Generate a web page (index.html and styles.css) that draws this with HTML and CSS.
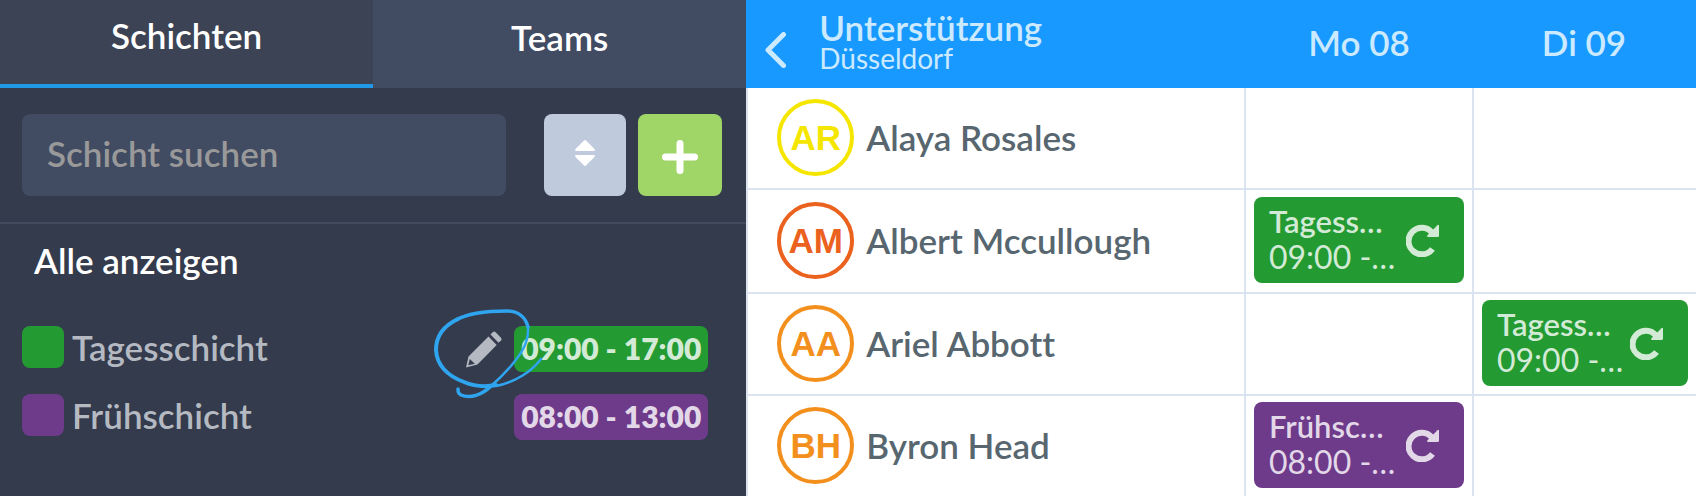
FILE: index.html
```html
<!DOCTYPE html>
<html lang="de">
<head>
    <meta charset="UTF-8">
    <meta name="viewport" content="width=device-width, initial-scale=1.0">
    <title>Schichtplan</title>
    <link rel="stylesheet" href="styles.css">
</head>
<body>
    <svg class="sprite" aria-hidden="true">
        <symbol id="icon-repeat" viewBox="0 0 34 34">
            <path d="M26 9.500A13.300 13.300 0 1 0 26.500 26" fill="none" stroke="currentColor" stroke-width="6"/>
            <path d="M31.500 2.200Q33 1 33 3V12.500Q33 14 31.500 14H22.500Q20 14 21.500 12.300Z" fill="currentColor"/>
        </symbol>
    </svg>

    <div class="app">

        <!-- Sidebar -->
        <aside class="sidebar">
            <nav class="tabs">
                <button type="button" class="tab active">Schichten</button>
                <button type="button" class="tab">Teams</button>
            </nav>

            <form class="search-bar">
                <input type="text" class="search-input" placeholder="Schicht suchen" aria-label="Schicht suchen">
                <button type="button" class="icon-button sort" aria-label="Sortieren">
                    <svg width="20" height="26" viewBox="0 0 20 26" fill="#fff">
                        <path d="M9 .5Q10-.5 11 .5L19.500 9Q20.500 11 19 11H1Q-.5 11 .5 9Z"/>
                        <path d="M9 25.500Q10 26.500 11 25.500L19.500 17Q20.500 15 19 15H1Q-.5 15 .5 17Z"/>
                    </svg>
                </button>
                <button type="button" class="icon-button add" aria-label="Schicht hinzufügen">
                    <svg width="36" height="34" viewBox="0 0 36 34" fill="none" stroke="#fff" stroke-width="7" stroke-linecap="round">
                        <path d="M18 3.500V30.500M3.500 17H32.500"/>
                    </svg>
                </button>
            </form>

            <section class="shifts">
                <h2>Alle anzeigen</h2>
                <ul class="shift-list">
                    <li class="shift">
                        <span class="swatch green"></span>
                        <span class="shift-name">Tagesschicht</span>
                        <button type="button" class="edit" aria-label="Tagesschicht bearbeiten">
                            <svg width="36" height="37" viewBox="0 0 36 37" fill="currentColor">
                                <path d="M24.500 3.500L27 1Q28.200 0 29.400 1L35.200 7Q36 8.200 35.200 9.300L32.500 11.800Z"/>
                                <path fill-rule="evenodd" d="M22.500 5.500L30.700 14L11.500 33.500L0 36.500L2.500 25.500ZM3.800 28L2.300 34.200L8.800 32.700Z"/>
                            </svg>
                            <svg class="scribble" width="110" height="94" viewBox="0 0 110 94" fill="none" stroke="#2fa4ef" stroke-linecap="round" stroke-linejoin="round">
                                <path stroke-width="4" d="M24 19C9 26 2 36 2 50C3 66 14 76 30 82C42 87 52 87 62 85"/>
                                <path stroke-width="2.500" d="M62 86C82 82 98 71 107 59"/>
                                <path stroke-width="3.500" d="M22 20C36 12 58 11 73 11C86 11 92 19 94 27"/>
                                <path stroke-width="2.500" d="M94 27C95 44 86 55 77 66C70 74 64 80 57 86"/>
                                <path stroke-width="3.500" d="M57 86C48 95 36 99 27 95C24 93 24 92 24 89"/>
                            </svg>
                        </button>
                        <span class="badge green">09:00 - 17:00</span>
                    </li>
                    <li class="shift">
                        <span class="swatch purple"></span>
                        <span class="shift-name">Frühschicht</span>
                        <span class="badge purple">08:00 - 13:00</span>
                    </li>
                </ul>
            </section>
        </aside>

        <!-- Schedule -->
        <main class="schedule">
            <table>
                <colgroup>
                    <col>
                    <col class="col-mo">
                    <col class="col-di">
                </colgroup>
                <thead>
                    <tr>
                        <th>
                            <div class="location">
                                <button type="button" class="back" aria-label="Zurück">
                                    <svg width="22" height="36" viewBox="0 0 22 36" fill="none" stroke="currentColor" stroke-width="5" stroke-linecap="round" stroke-linejoin="round">
                                        <path d="M18.500 2.500L3 18L18.500 33.500"/>
                                    </svg>
                                </button>
                                <div class="location-text">
                                    <span class="location-name">Unterstützung</span>
                                    <span class="location-city">Düsseldorf</span>
                                </div>
                            </div>
                        </th>
                        <th class="day">Mo 08</th>
                        <th class="day">Di 09</th>
                    </tr>
                </thead>
                <tbody>
                    <tr>
                        <td>
                            <div class="employee"><span class="avatar yellow">AR</span>Alaya Rosales</div>
                        </td>
                        <td></td>
                        <td></td>
                    </tr>
                    <tr class="tall">
                        <td>
                            <div class="employee"><span class="avatar red">AM</span>Albert Mccullough</div>
                        </td>
                        <td>
                            <div class="entry green">
                                <div class="entry-text">
                                    <span class="entry-name">Tagesschicht</span>
                                    <span class="entry-time">09:00 - 17:00</span>
                                </div>
                                <svg class="repeat"><use href="#icon-repeat"/></svg>
                            </div>
                        </td>
                        <td></td>
                    </tr>
                    <tr>
                        <td>
                            <div class="employee"><span class="avatar orange">AA</span>Ariel Abbott</div>
                        </td>
                        <td></td>
                        <td>
                            <div class="entry green">
                                <div class="entry-text">
                                    <span class="entry-name">Tagesschicht</span>
                                    <span class="entry-time">09:00 - 17:00</span>
                                </div>
                                <svg class="repeat"><use href="#icon-repeat"/></svg>
                            </div>
                        </td>
                    </tr>
                    <tr>
                        <td>
                            <div class="employee"><span class="avatar orange">BH</span>Byron Head</div>
                        </td>
                        <td>
                            <div class="entry purple">
                                <div class="entry-text">
                                    <span class="entry-name">Frühschicht</span>
                                    <span class="entry-time">08:00 - 13:00</span>
                                </div>
                                <svg class="repeat"><use href="#icon-repeat"/></svg>
                            </div>
                        </td>
                        <td></td>
                    </tr>
                </tbody>
            </table>
        </main>
    </div>
</body>
</html>
```
FILE: styles.css
```css
* {
    box-sizing: border-box;
}

body {
    margin: 0;
    font-family: Lato, "Liberation Sans", sans-serif;
    font-size: 35px;
    font-weight: 600;
    font-variant-ligatures: none;
    line-height: 40px;
    background-color: #fff;
}

button {
    padding: 0;
    border: none;
    background: none;
    color: inherit;
    font: inherit;
    cursor: pointer;
}

svg {
    display: block;
}

.sprite {
    display: none;
}

.app {
    display: grid;
    grid-template-columns: 44% 1fr;
    height: 100vh;
    overflow: hidden;
}

/* Sidebar */
.sidebar {
    background-color: #333b4d;
    color: #fff;
}

.tabs {
    display: grid;
    grid-template-columns: 1fr 1fr;
    height: 88px;
}

.tab {
    padding-bottom: 14px;
    background-color: #414b62;
}

.tab.active {
    background-color: #3b4355;
    border-bottom: 4px solid #2199e6;
}

.search-bar {
    display: flex;
    gap: 12px;
    padding: 26px 24px 26px 22px;
    border-bottom: 2px solid #414b5d;
}

.search-input {
    flex: 1;
    min-width: 0;
    height: 82px;
    margin-right: 26px;
    padding: 0 25px 4px;
    border: none;
    border-radius: 8px;
    background-color: #414b62;
    color: #fff;
    font: inherit;
    outline: none;
}

.search-input::placeholder {
    color: #999;
}

.icon-button {
    display: flex;
    align-items: center;
    justify-content: center;
    width: 82px;
    height: 82px;
    border-radius: 8px;
}

.sort {
    padding-bottom: 4px;
    background-color: #bfcadd;
}

.add {
    width: 84px;
    padding-top: 4px;
    background-color: #a0d568;
}

.shifts {
    padding: 16px 38px 0 22px;
}

.shifts h2 {
    margin: 0 12px;
    font-size: inherit;
    font-weight: inherit;
}

.shift-list {
    display: grid;
    gap: 22px;
    margin: 46px 0 0;
    padding: 0;
    list-style: none;
}

.shift {
    display: flex;
    align-items: center;
    height: 46px;
    color: #b5b9c1;
}

.swatch {
    width: 42px;
    height: 42px;
    margin: 0 8px 4px 0;
    border-radius: 8px;
}

.shift-name {
    flex: 1;
    padding-bottom: 4px;
}

.green {
    background-color: #249a32;
    color: #d3ebd6;
}

.purple {
    background-color: #6e3a8a;
    color: #e2d8e8;
}

.edit {
    position: relative;
    margin-right: 12px;
    color: #b5b9c1;
}

/* Hand-drawn ring lies over the pencil and the badge */
.scribble {
    position: absolute;
    left: -32px;
    top: -31px;
    z-index: 1;
    overflow: visible;
    pointer-events: none;
}

.badge {
    width: 194px;
    height: 46px;
    border-radius: 8px;
    font-size: 30px;
    font-weight: 800;
    line-height: 44px;
    text-align: center;
    white-space: nowrap;
}

/* Schedule */
.schedule table {
    width: 100%;
    table-layout: fixed;
    border-collapse: separate;
    border-spacing: 0;
}

.col-mo {
    width: 228px;
}

.col-di {
    width: 222px;
}

.schedule th {
    height: 88px;
    padding: 0;
    background-color: #1899ff;
    color: #cceaff;
    font-weight: inherit;
}

.schedule .day {
    padding: 0 2px 4px 0;
}

.location {
    display: flex;
    align-items: center;
    gap: 32px;
    padding-left: 19px;
    text-align: left;
}

.back {
    margin-top: 12px;
}

.location-text {
    display: grid;
    padding-bottom: 4px;
}

.location-name {
    line-height: 32px;
}

.location-city {
    font-size: 28px;
    font-weight: 400;
    line-height: 30px;
}

.schedule td {
    height: 102px;
    padding: 5px 8px 7px;
    border-right: 2px solid #dbe3f1;
    border-bottom: 2px solid #dbe3f1;
}

.schedule .tall td {
    height: 104px;
}

.schedule td:first-child {
    padding-left: 29px;
    border-left: 2px solid #dbe3f1;
}

.schedule td:last-child {
    border-right: none;
}

.employee {
    display: flex;
    align-items: center;
    gap: 12px;
    color: #57666f;
}

.avatar {
    width: 77px;
    height: 77px;
    border: 4px solid;
    border-radius: 50%;
    font-family: "Liberation Sans", sans-serif;
    font-size: 35px;
    font-weight: 700;
    line-height: 69px;
    text-align: center;
}

.yellow {
    color: #f5e600;
}

.red {
    color: #eb611e;
}

.orange {
    color: #f3901d;
}

.entry {
    display: flex;
    align-items: center;
    justify-content: space-between;
    height: 86px;
    padding: 0 24px 0 15px;
    border-radius: 8px;
}

.entry-text {
    display: grid;
    width: 130px;
    padding-bottom: 2px;
}

.entry-text span {
    overflow: hidden;
    text-overflow: ellipsis;
    white-space: nowrap;
}

.entry-name {
    margin-right: 8px;
    font-size: 31px;
    line-height: 36px;
}

.entry-time {
    font-size: 32px;
    font-weight: 400;
    line-height: 36px;
}

.repeat {
    flex: none;
    width: 34px;
    height: 34px;
}
```
